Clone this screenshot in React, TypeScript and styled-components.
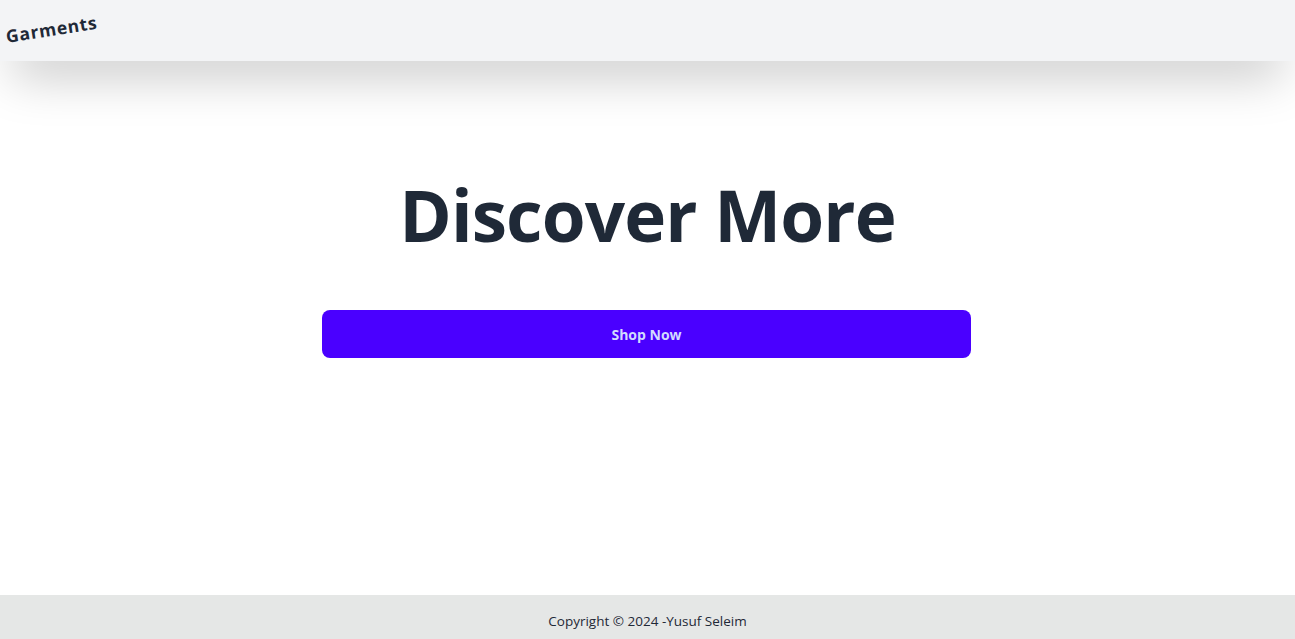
import styled, { createGlobalStyle } from "styled-components";

const GlobalStyle = createGlobalStyle`
  * { box-sizing: border-box; }
  body {
    margin: 0;
    font-family: "Open Sans", "Noto Sans", sans-serif;
    background: #ffffff;
    color: #1f2937;
  }
`;

const Page = styled.div`
  min-height: 100vh;
  display: flex;
  flex-direction: column;
`;

const Header = styled.header`
  height: 61px;
  background: #f3f4f6;
  box-shadow: 0 25px 50px -12px rgba(0, 0, 0, 0.25);
  display: flex;
  align-items: flex-start;
  padding: 14px 6px;
  position: relative;
  z-index: 1;
`;

const Logo = styled.span`
  display: inline-block;
  font-size: 17.5px;
  font-weight: 700;
  letter-spacing: 0.7px;
  color: #1f2937;
  transform: rotate(-9deg);
  transform-origin: left center;
  margin-top: 10px;
`;

const Main = styled.main`
  flex: 1;
  display: flex;
  flex-direction: column;
  align-items: center;
  padding-top: 118px;
`;

const Title = styled.h1`
  margin: 0;
  font-size: 71px;
  line-height: 1;
  font-weight: 700;
  color: #1f2937;
  letter-spacing: -0.9px;
`;

const ShopButton = styled.button`
  margin-top: 60px;
  margin-right: 2px;
  width: 649px;
  height: 48px;
  border: none;
  border-radius: 8px;
  background: #4a00ff;
  color: #d1dbff;
  font-family: inherit;
  font-size: 14px;
  font-weight: 700;
  cursor: pointer;
`;

const Footer = styled.footer`
  height: 44px;
  background: #e5e7e6;
  display: flex;
  align-items: center;
  justify-content: center;
  font-size: 13.5px;
  color: #1f2937;
  padding-top: 7px;
`;

export default function App() {
  return (
    <>
      <GlobalStyle />
      <Page>
        <Header>
          <Logo>Garments</Logo>
        </Header>
        <Main>
          <Title>Discover More</Title>
          <ShopButton>Shop Now</ShopButton>
        </Main>
        <Footer>Copyright © 2024 -Yusuf Seleim</Footer>
      </Page>
    </>
  );
}
